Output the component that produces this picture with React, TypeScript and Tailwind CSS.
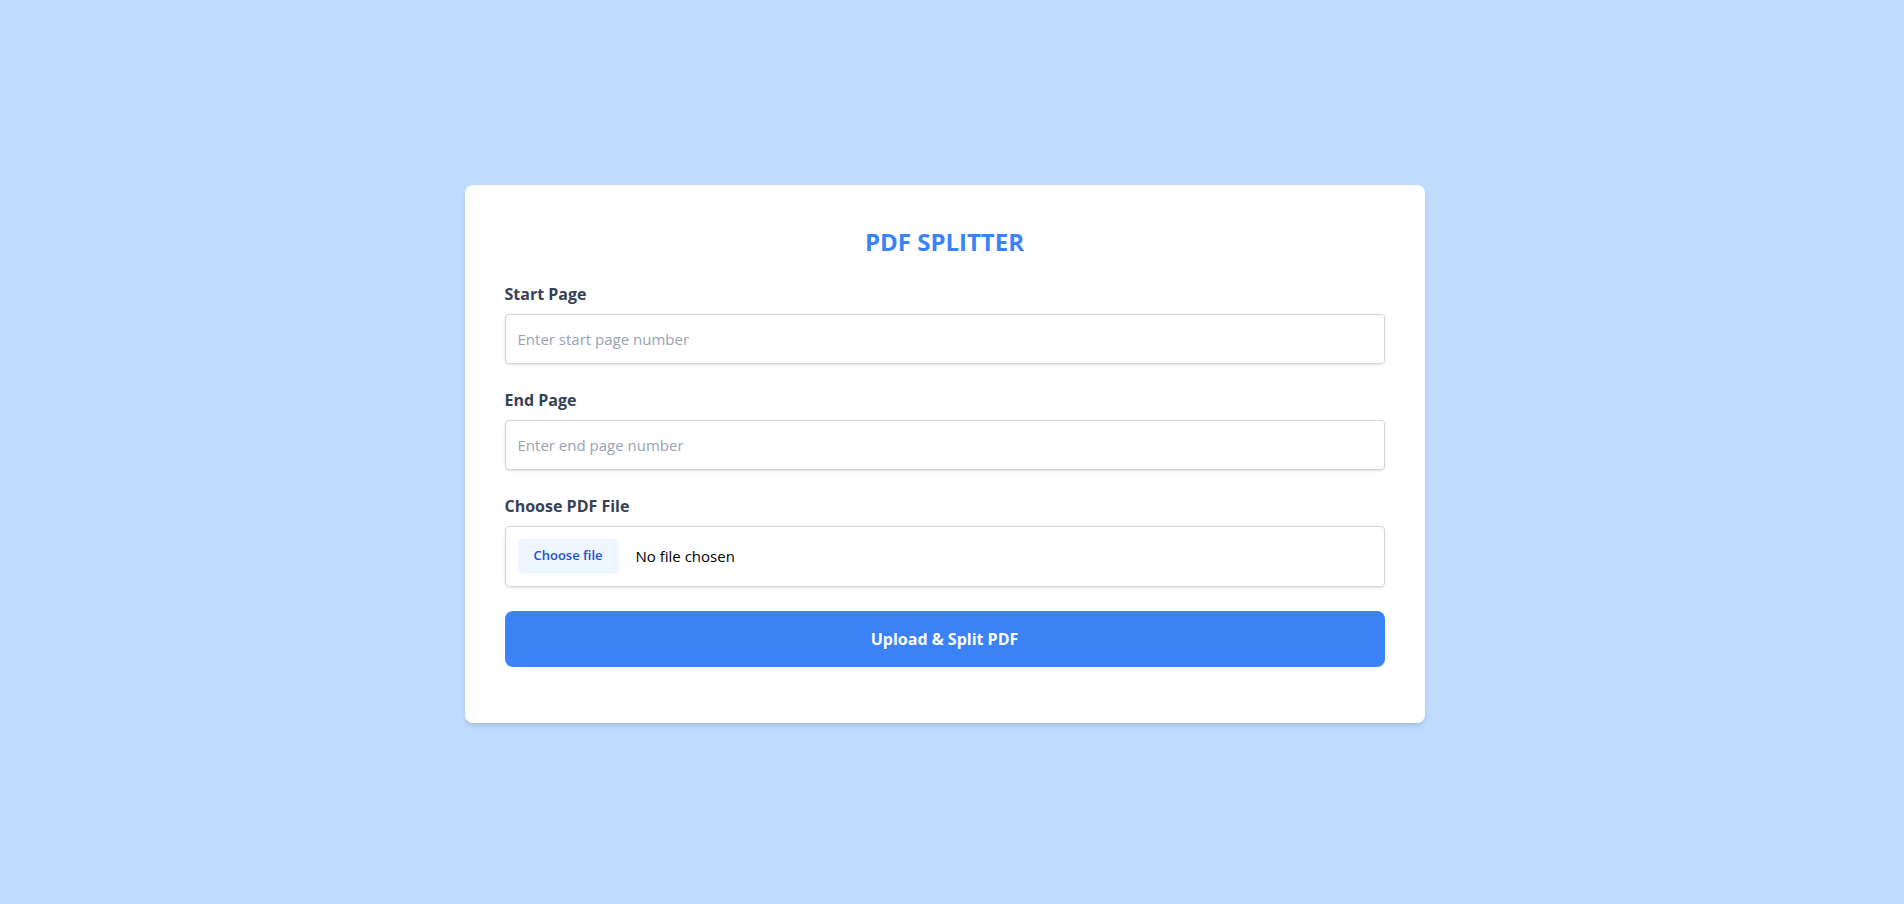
export default function App() {
  return (
    <div
      className="flex min-h-screen w-full items-center justify-center bg-[#bfdbfe] pr-[15px] pt-[3px]"
      style={{ fontFamily: '"Open Sans", "Noto Sans", sans-serif' }}
    >
      {/* Card */}
      <div className="w-[960px] rounded-lg bg-white px-10 pb-14 pt-[41px] shadow-md">
        <h1 className="mb-6 text-center text-2xl font-bold text-[#3b82f6]">PDF SPLITTER</h1>

        <form className="flex flex-col" onSubmit={(e) => e.preventDefault()}>
          <div className="mb-6">
            <label className="mb-2 block text-base font-bold text-gray-700">Start Page</label>
            <input
              type="number"
              placeholder="Enter start page number"
              className="block w-full rounded border border-gray-300 px-3 py-3 text-[15px] leading-6 text-gray-700 shadow-sm outline-none placeholder:text-gray-400"
            />
          </div>

          <div className="mb-6">
            <label className="mb-2 block text-base font-bold text-gray-700">End Page</label>
            <input
              type="number"
              placeholder="Enter end page number"
              className="block w-full rounded border border-gray-300 px-3 py-3 text-[15px] leading-6 text-gray-700 shadow-sm outline-none placeholder:text-gray-400"
            />
          </div>

          <div className="mb-6">
            <label className="mb-2 block text-base font-bold text-gray-700">Choose PDF File</label>
            <label className="flex w-full cursor-pointer items-center rounded border border-gray-300 p-3 shadow-sm">
              <input type="file" accept="application/pdf" className="hidden" />
              <span className="flex h-[35px] items-center rounded bg-[#eff6ff] px-4 text-[13px] font-semibold text-[#1d4ed8]">
                Choose file
              </span>
              <span className="ml-[17px] text-[15px] text-black">No file chosen</span>
            </label>
          </div>

          <button
            type="submit"
            className="w-full rounded-lg bg-[#3b82f6] py-4 text-base font-bold leading-6 text-white"
          >
            Upload &amp; Split PDF
          </button>
        </form>
      </div>
    </div>
  );
}
